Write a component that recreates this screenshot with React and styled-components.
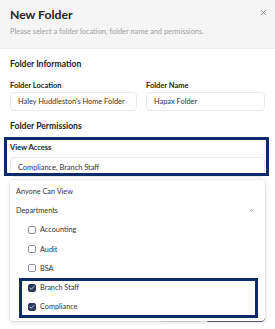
// External dependencies
import React from 'react';
import styled, { createGlobalStyle } from 'styled-components';
import { X, ChevronDown, Check } from 'lucide-react';

const NAVY = '#0b2b6b';

const GlobalStyle = createGlobalStyle`
    body {
        margin: 0;
        background: #ffffff;
        font-family: Lato, "Noto Sans", sans-serif;
        color: #222;
    }
`

const Modal = styled.div`
    width: 275px;
    height: 329px;
    overflow: hidden;
    background: #fff;
`

const Header = styled.div`
    display: flex;
    justify-content: space-between;
    align-items: flex-start;
    height: 49px;
    box-sizing: border-box;
    padding: 7px 7px 0 10px;
    background: #f5f5f5;
    border-bottom: 1px solid #ededed;
`

const Title = styled.div`
    font-size: 12.2px;
    font-weight: 700;
    line-height: 16px;
    color: #222;
`

const Subtitle = styled.div`
    margin-top: 2.5px;
    font-size: 7.4px;
    line-height: 11px;
    color: #9d9d9d;
`

const CloseButton = styled.div`
    display: flex;
    color: #666;
    margin-top: 1px;
`

const Body = styled.div`
    padding: 9px 10px 0 10px;
`

const SectionTitle = styled.div`
    font-size: 8.6px;
    font-weight: 700;
    line-height: 12px;
    color: #222;
    margin-bottom: ${({ $gap }) => $gap};
`

const FieldGrid = styled.div`
    display: grid;
    grid-template-columns: 127px 119px;
    column-gap: 9px;
    margin-bottom: 9px;
`

const FieldLabel = styled.div`
    font-size: 7.5px;
    font-weight: 700;
    line-height: 10px;
    color: #222;
    margin-bottom: ${({ $gap }) => $gap || '1px'};
`

const Input = styled.div`
    display: flex;
    align-items: center;
    gap: 3px;
    height: ${({ $height }) => $height || '19px'};
    box-sizing: border-box;
    padding: 0 7px;
    border: 1px solid #e9e9e9;
    border-radius: 4px;
    font-size: 7.4px;
    color: #333;
    white-space: nowrap;
`

const Highlight = styled.div`
    position: relative;

    &::after {
        content: '';
        position: absolute;
        top: ${({ $top }) => $top};
        bottom: ${({ $bottom }) => $bottom};
        left: ${({ $left }) => $left};
        right: ${({ $right }) => $right};
        border: 3px solid ${NAVY};
        pointer-events: none;
        z-index: 3;
    }
`

const SelectWrap = styled.div`
    position: relative;
`

const Dropdown = styled.div`
    position: absolute;
    top: calc(100% + 3px);
    left: 0;
    right: 0;
    z-index: 2;
    padding: 1.5px 0 4.5px 0;
    background: #fff;
    border-radius: 4px;
    box-shadow: 0 1px 4px rgba(0, 0, 0, 0.16), 0 0 0 1px rgba(0, 0, 0, 0.03);
`

const Option = styled.div`
    display: flex;
    align-items: center;
    justify-content: space-between;
    height: 19.3px;
    padding: 0 10px 0 ${({ $indent }) => $indent || '6px'};
    font-size: 7.3px;
    color: #333;
`

const CheckRow = styled.div`
    display: flex;
    align-items: center;
    gap: 4px;
`

const Box = styled.span`
    display: inline-flex;
    align-items: center;
    justify-content: center;
    width: 8px;
    height: 8px;
    box-sizing: border-box;
    border-radius: 2px;
    border: 1px solid ${({ $checked }) => ($checked ? '#2e3a5c' : '#9096a0')};
    background: ${({ $checked }) => ($checked ? '#2e3a5c' : '#fff')};
    color: #fff;
`

const Footer = styled.div`
    display: flex;
    justify-content: flex-end;
    gap: 2px;
    margin-top: 123px;
`

const FooterButton = styled.div`
    width: ${({ $width }) => $width};
    height: 22px;
    box-sizing: border-box;
    border-radius: 4px;
    border: 1px solid ${({ $primary }) => ($primary ? '#5d6579' : '#e4e4e4')};
    background: ${({ $primary }) => ($primary ? '#2e3a5c' : '#fff')};
    color: ${({ $primary }) => ($primary ? '#fff' : '#333')};
    font-size: 7.4px;
    display: flex;
    align-items: center;
    justify-content: center;
`

const departments = [
    { name: 'Accounting', checked: false },
    { name: 'Audit', checked: false },
    { name: 'BSA', checked: false },
];

const selected = [
    { name: 'Branch Staff', checked: true },
    { name: 'Compliance', checked: true },
];

const CheckOption = ({ name, checked }) => (
    <Option $indent="18px">
        <CheckRow>
            <Box $checked={checked}>
                {checked && <Check size={6} strokeWidth={3} />}
            </Box>
            {name}
        </CheckRow>
    </Option>
)

const App = () => {
    return (
        <>
            <GlobalStyle />
            <Modal>
                <Header>
                    <div>
                        <Title>New Folder</Title>
                        <Subtitle>Please select a folder location, folder name and permissions.</Subtitle>
                    </div>
                    <CloseButton><X size={9} strokeWidth={1.6} /></CloseButton>
                </Header>
                <Body>
                    <SectionTitle $gap="11px">Folder Information</SectionTitle>
                    <FieldGrid>
                        <div>
                            <FieldLabel>Folder Location</FieldLabel>
                            <Input>
                                Haley Huddleston&apos;s Home Folder
                                <ChevronDown size={6} color="#666" />
                            </Input>
                        </div>
                        <div>
                            <FieldLabel>Folder Name</FieldLabel>
                            <Input>Hapax Folder</Input>
                        </div>
                    </FieldGrid>
                    <SectionTitle $gap="11px">Folder Permissions</SectionTitle>
                    <Highlight $top="-6px" $bottom="1px" $left="-6px" $right="-4px">
                        <FieldLabel $gap="4px">View Access</FieldLabel>
                        <SelectWrap>
                            <Input $height="20px">Compliance, Branch Staff</Input>
                            <Dropdown>
                                <Option>Anyone Can View</Option>
                                <Option>
                                    Departments
                                    <ChevronDown size={7} color="#555" />
                                </Option>
                                {departments.map((d) => (
                                    <CheckOption key={d.name} {...d} />
                                ))}
                                <Highlight $top="0px" $bottom="-1px" $left="9px" $right="7px">
                                    {selected.map((d) => (
                                        <CheckOption key={d.name} {...d} />
                                    ))}
                                </Highlight>
                            </Dropdown>
                        </SelectWrap>
                    </Highlight>
                    <Footer>
                        <FooterButton $width="45px">Cancel</FooterButton>
                        <FooterButton $width="60px" $primary>Create</FooterButton>
                    </Footer>
                </Body>
            </Modal>
        </>
    );
}

export default App;
